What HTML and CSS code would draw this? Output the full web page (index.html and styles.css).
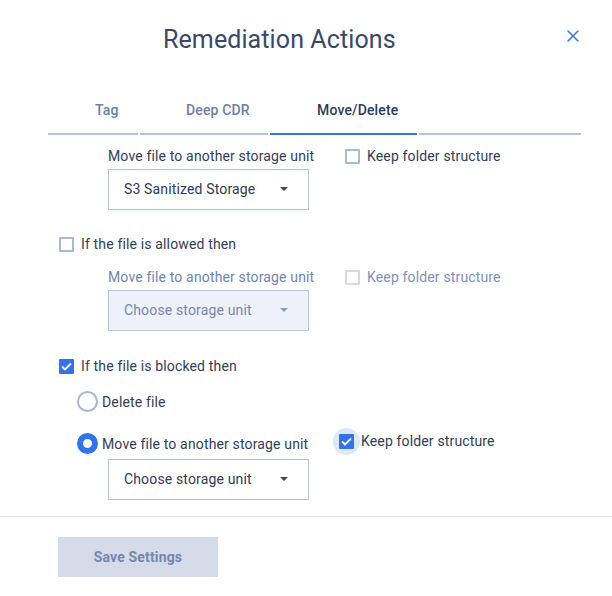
FILE: index.html
```html
<!DOCTYPE html>
<html>
<head>
<meta charset="utf-8">
<link rel="stylesheet" href="styles.css">
</head>
<body>
<div class="modal">
  <header class="header">
    <h1 class="title">Remediation Actions</h1>
    <button class="close" aria-label="Close">
      <svg width="12" height="12" viewBox="0 0 12 12"><path d="M1 1L11 11M11 1L1 11" stroke="#3a7ce0" stroke-width="1.6" stroke-linecap="round"/></svg>
    </button>
  </header>
  <nav class="tabs">
    <div class="tab t1">Tag</div>
    <div class="tab t2">Deep CDR</div>
    <div class="tab t3 active">Move/Delete</div>
    <div class="tab t4"></div>
  </nav>
  <div class="content">
    <div class="row r1">
      <div class="col">
        <div class="label">Move file to another storage unit</div>
        <div class="select"><span>S3 Sanitized Storage</span><span class="caret"></span></div>
      </div>
      <div class="check"><span class="box"></span>Keep folder structure</div>
    </div>

    <div class="check cond c1"><span class="box"></span>If the file is allowed then</div>
    <div class="row r2 disabled">
      <div class="col">
        <div class="label">Move file to another storage unit</div>
        <div class="select"><span>Choose storage unit</span><span class="caret"></span></div>
      </div>
      <div class="check"><span class="box"></span>Keep folder structure</div>
    </div>

    <div class="check cond c2 checked"><span class="box"><svg width="11" height="9" viewBox="0 0 11 9"><path d="M1 4.5L4 7.5L10 1.5" fill="none" stroke="#fff" stroke-width="1.8"/></svg></span>If the file is blocked then</div>
    <div class="radio r-del"><span class="dot"></span>Delete file</div>
    <div class="row r3">
      <div class="col">
        <div class="radio on"><span class="dot"></span>Move file to another storage unit</div>
        <div class="select dark"><span>Choose storage unit</span><span class="caret"></span></div>
      </div>
      <div class="check focus checked"><span class="halo"><span class="box"><svg width="11" height="9" viewBox="0 0 11 9"><path d="M1 4.5L4 7.5L10 1.5" fill="none" stroke="#fff" stroke-width="1.8"/></svg></span></span>Keep folder structure</div>
    </div>
  </div>
  <footer class="footer">
    <button class="save">Save Settings</button>
  </footer>
</div>
</body>
</html>
```

FILE: styles.css
```css
* { box-sizing: border-box; }
html, body { margin: 0; padding: 0; background: #fff; }
body {
  font-family: Roboto, "Liberation Sans", sans-serif;
  font-size: 14px;
  letter-spacing: 0.15px;
  color: #333d57;
  width: 612px;
  height: 596px;
  overflow: hidden;
}
.modal { width: 612px; }

.header {
  height: 90px;
  display: flex;
  align-items: flex-start;
  padding: 0 0 0 163px;
}
.title {
  margin: 23px 0 0 0;
  font-size: 25px;
  line-height: 34px;
  font-weight: 400;
  color: #3a4868;
  letter-spacing: 0.1px;
}
.close {
  margin: 30px 33px 0 auto;
  width: 12px;
  height: 12px;
  padding: 0;
  border: 0;
  background: none;
  display: flex;
}

.tabs {
  display: flex;
  gap: 2px;
  padding-left: 48px;
}
.tab {
  padding: 10px 0 13px 47px;
  line-height: 20px;
  height: 45px;
  font-weight: 500;
  color: #6e7ea7;
  border-bottom: 2px solid #b4c1dc;
}
.t1 { width: 90px; }
.t2 { width: 128px; padding-left: 46px; }
.t3 { width: 147px; }
.t4 { width: 162px; }
.tab.active { color: #2f3b58; border-bottom-color: #2e74ec; }

.content {
  padding: 0 0 16px 59px;
}
.row { display: flex; align-items: flex-start; }
.col { display: flex; flex-direction: column; }
.r1 { margin: 11px 0 0 49px; }
.r1 .col, .r2 .col { width: 237px; }
.r2 { margin: 13px 0 0 49px; }
.label { line-height: 20px; white-space: nowrap; }

.select {
  margin-top: 3px;
  width: 201px;
  height: 41px;
  border: 1px solid #b6c3dd;
  background: #fff;
  display: flex;
  align-items: center;
  justify-content: space-between;
  padding: 0 20px 1px 15px;
  color: #2f3a56;
}
.caret {
  width: 0; height: 0;
  border-left: 4px solid transparent;
  border-right: 4px solid transparent;
  border-top: 4px solid #3b4664;
}

.check {
  display: flex;
  align-items: center;
  line-height: 20px;
  white-space: nowrap;
}
.box {
  width: 15px;
  height: 15px;
  border: 2px solid #a9b8d7;
  border-radius: 1px;
  margin-right: 7px;
  display: flex;
  align-items: center;
  justify-content: center;
  flex: none;
}
.checked .box { background: #2f74eb; border-color: #2f74eb; }

.cond.c1 { margin-top: 24px; }
.cond.c2 { margin-top: 25px; }

.disabled .label { color: #7284b0; }
.disabled .select { background: #eef1f9; color: #7787ae; border-color: #b9c5de; }
.disabled .caret { border-top-color: #8a98b9; }
.disabled .check { color: #8090b6; }
.disabled .check .box { border-color: #d3d9e7; }

.radio {
  display: flex;
  align-items: center;
  height: 21px;
  white-space: nowrap;
}
.dot {
  width: 21px;
  height: 21px;
  border-radius: 50%;
  border: 2px solid #a9b6d2;
  margin-right: 4px;
  flex: none;
}
.radio.on .dot { border: 6.5px solid #2f74eb; }
.r-del { margin: 15px 0 0 18px; }
.r3 { margin: 21px 0 0 18px; }
.r3 .col { width: 262px; }
.r3 .select { margin: 5px 0 0 31px; }
.dark { color: #2f3b5c; }

.check.focus { margin-top: -2px; line-height: 20px; }
.halo {
  width: 27px;
  height: 27px;
  border-radius: 50%;
  background: #dde8fa;
  display: flex;
  align-items: center;
  justify-content: center;
  margin: -4px 1px -4px -6px;
}
.halo .box { margin-right: 0; }

.footer {
  border-top: 1px solid #e4e8f1;
  padding: 20px 0 0 58px;
}
.save {
  width: 160px;
  height: 40px;
  border: 0;
  background: #d5dbe8;
  color: #7886ac;
  font-family: Roboto, "Liberation Sans", sans-serif;
  font-size: 14px;
  font-weight: 700;
  letter-spacing: 0.15px;
  padding: 0;
}
```
